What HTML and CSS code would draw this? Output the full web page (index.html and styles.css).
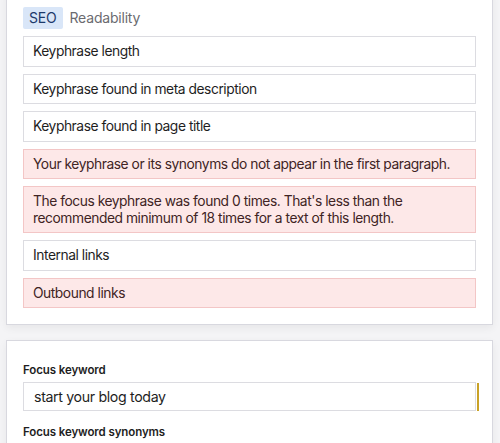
FILE: index.html
```html
<!DOCTYPE html>
<html>
<head>
<meta charset="utf-8">
<link rel="stylesheet" href="styles.css">
</head>
<body>
<div class="page">
  <section class="card card-analysis">
    <div class="tabs">
      <span class="tab tab-active">SEO</span>
      <span class="tab">Readability</span>
    </div>
    <ul class="results">
      <li class="result">Keyphrase length</li>
      <li class="result">Keyphrase found in meta description</li>
      <li class="result">Keyphrase found in page title</li>
      <li class="result result-bad">Your keyphrase or its synonyms do not appear in the first paragraph.</li>
      <li class="result result-bad">The focus keyphrase was found 0 times. That's less than the<br>recommended minimum of 18 times for a text of this length.</li>
      <li class="result">Internal links</li>
      <li class="result result-bad">Outbound links</li>
    </ul>
  </section>
  <section class="card card-form">
    <label class="label">Focus keyword</label>
    <div class="input">start your blog today</div>
    <label class="label label-next">Focus keyword synonyms</label>
  </section>
</div>
</body>
</html>
```
FILE: styles.css
```css
html, body {
  margin: 0;
  padding: 0;
  background: #f4f4f6;
  overflow: hidden;
}
body {
  font-family: Inter, "Liberation Sans", sans-serif;
  color: #1e1e1e;
}
.page {
  padding: 0 7px 0 6px;
}
.card {
  background: #fff;
  border: 1px solid #d8d8df;
  box-shadow: 0 3px 8px rgba(0, 0, 0, 0.06);
}
.card-analysis {
  margin-top: -10px;
  padding: 16px 16px 16px 16px;
}
.tabs {
  display: flex;
  gap: 1px;
  height: 22px;
}
.tab {
  padding: 0 6px;
  font-size: 14px;
  line-height: 22px;
  letter-spacing: -0.2px;
  color: #6b6b70;
  border-radius: 2px;
}
.tab-active {
  background: #d9e6f8;
  color: #1d3a6b;
}
.results {
  list-style: none;
  margin: 7px 0 0 0;
  padding: 0;
  display: flex;
  flex-direction: column;
  gap: 7px;
}
.result {
  border: 1px solid #dcdce1;
  padding: 6px 9px;
  font-size: 13.8px;
  line-height: 16.5px;
  letter-spacing: -0.45px;
  white-space: nowrap;
  color: #1e1e1e;
}
.result-bad {
  background: #fde8e8;
  border-color: #f3c6c6;
  color: #3f2424;
}
.card-form {
  margin-top: 15px;
  padding: 21px 16px 10px 16px;
}
.label {
  display: block;
  font-size: 11.5px;
  font-weight: 600;
  line-height: 16px;
  letter-spacing: -0.1px;
  color: #1e1e1e;
}
.input {
  position: relative;
  margin-top: 4px;
  height: 27px;
  border: 1px solid #dcdce1;
  padding: 0 10px;
  font-size: 14.2px;
  line-height: 27px;
  letter-spacing: -0.35px;
  color: #1e1e1e;
}
.input::after {
  content: "";
  position: absolute;
  right: -4px;
  top: 0;
  width: 2px;
  height: 28px;
  background: #c9a227;
}
.label-next {
  margin-top: 13px;
}
```
